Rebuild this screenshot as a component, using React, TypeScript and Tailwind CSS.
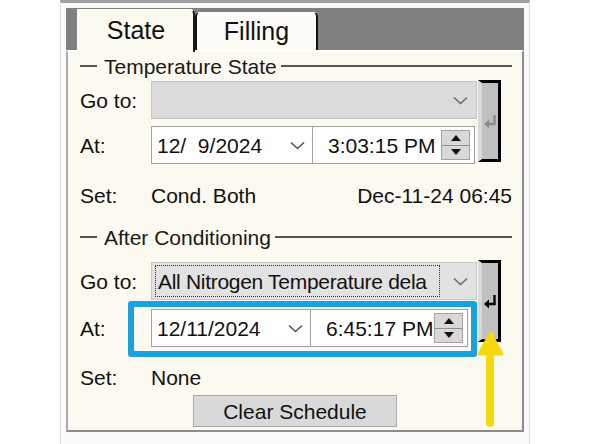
import React from "react";

const Chevron = ({ color = "#6b6b6b" }: { color?: string }) => (
  <svg width="15" height="9" viewBox="0 0 15 9" className="shrink-0">
    <path d="M1 1.5 L7.5 7.5 L14 1.5" fill="none" stroke={color} strokeWidth="1.6" />
  </svg>
);

const Spin = () => (
  <div className="w-[29px] h-[30px] border border-[#a3a3a3] bg-[#d8d8d8] flex flex-col shrink-0">
    <div className="flex-1 flex items-center justify-center border-b border-[#8f8f8f]">
      <svg width="10" height="6" viewBox="0 0 10 6">
        <path d="M5 0 L10 6 L0 6 Z" fill="#111" />
      </svg>
    </div>
    <div className="flex-1 flex items-center justify-center">
      <svg width="10" height="6" viewBox="0 0 10 6">
        <path d="M0 0 L10 0 L5 6 Z" fill="#111" />
      </svg>
    </div>
  </div>
);

const ReturnIcon = ({ color }: { color: string }) => (
  <svg width="13" height="15" viewBox="0 0 13 15">
    <path d="M10.5 1 V10 H4" fill="none" stroke={color} strokeWidth="2.4" />
    <path d="M0 10 L5 5.5 L5 14.5 Z" fill={color} />
  </svg>
);

function GroupHeader({ title }: { title: string }) {
  return (
    <div className="flex items-center h-[20px]">
      <div className="w-[17px] border-t-2 border-[#555]" />
      <span className="ml-[7px] mr-[4px] text-[#1a1a1a]">{title}</span>
      <div className="flex-1 border-t-2 border-[#555]" />
    </div>
  );
}

function ApplyButton({ active }: { active: boolean }) {
  return (
    <div className="ml-[1px] w-[23px] h-[82px] border-t-[3px] border-r-[3px] border-b-[3px] border-black border-l-[4px] border-l-[#d9d9d9] bg-[#c0c0c0] flex items-center justify-center shrink-0">
      <ReturnIcon color={active ? "#000" : "#8c8c8c"} />
    </div>
  );
}

function DateField({ value, width }: { value: string; width: string }) {
  return (
    <div className={`${width} h-[38px] bg-white border border-[#a0a0a0] flex items-center pl-[5px] pr-[7px]`}>
      <span className="whitespace-pre flex-1">{value}</span>
      <Chevron color="#555" />
    </div>
  );
}

function TimeField({ value, width }: { value: string; width: string }) {
  return (
    <div className={`${width} h-[38px] bg-white border border-l-0 border-[#a0a0a0] flex items-center pl-[15px] pr-[4px]`}>
      <span className="flex-1 whitespace-pre">{value}</span>
      <Spin />
    </div>
  );
}

export default function App() {
  return (
    <div className="w-[592px] h-[444px] bg-white overflow-hidden font-['Liberation_Sans',Arial,sans-serif] text-[21px] leading-none text-[#111]">
      <div className="ml-[60px] w-[470px] h-[444px] border-t-[3px] border-t-[#a0a0a0] border-x border-x-[#dadada] bg-[#fafafa] pt-[5px] px-[5px]">
        {/* tab strip */}
        <div className="h-[42px] bg-[#808080] flex items-end pl-[11px]">
          <div className="w-[118px] h-[43px] -mb-[2px] z-10 bg-[#fcf9f0] border-l-2 border-t-2 border-white border-r-2 border-r-[#1a1a1a] rounded-tr-[5px] flex items-center justify-center pb-[3px] text-[25px]">
            State
          </div>
          <div className="w-[123px] h-[38px] bg-[#fdfbf6] border-x-2 border-[#111] border-t border-t-white rounded-t-[5px] flex items-center justify-center pb-[1px] text-[25px]">
            Filling
          </div>
        </div>

        {/* panel */}
        <div className="relative h-[382px] bg-[#fcf9f0] border-t-2 border-t-white border-l-2 border-l-[#a8a8a8] border-r-2 border-r-[#8c8c8c] border-b-2 border-b-[#8c8c8c] pl-[12px] pr-[10px]">
          <div className="mt-[4px]">
            <GroupHeader title="Temperature State" />
          </div>

          <div className="mt-[5px] flex items-start">
            <div className="w-[397px] flex flex-col gap-[7px]">
              <div className="flex items-center">
                <span className="w-[71px]">Go to:</span>
                <div className="w-[326px] h-[38px] bg-[#dbdbdb] border border-[#c6c6c6] flex items-center justify-end pr-[8px]">
                  <Chevron />
                </div>
              </div>
              <div className="flex items-center">
                <span className="w-[71px]">At:</span>
                <DateField value="12/  9/2024" width="w-[162px]" />
                <TimeField value="3:03:15 PM" width="w-[162px]" />
              </div>
            </div>
            <div className="-mt-[1px]">
              <ApplyButton active={false} />
            </div>
          </div>

          <div className="mt-[19px] h-[24px] flex items-center">
            <span className="w-[71px]">Set:</span>
            <span>Cond. Both</span>
            <span className="ml-auto">Dec-11-24 06:45</span>
          </div>

          <div className="mt-[20px]">
            <GroupHeader title="After Conditioning" />
          </div>

          <div className="mt-[15px] flex items-start">
            <div className="w-[397px] flex flex-col gap-[9px]">
              <div className="flex items-center">
                <span className="w-[71px]">Go to:</span>
                <div className="w-[326px] h-[38px] bg-[#e2e2e2] border border-[#c6c6c6] flex items-center pl-[3px] pr-[8px]">
                  <div className="w-[285px] h-[32px] border border-dotted border-[#333] flex items-center pl-[2px] overflow-hidden whitespace-nowrap tracking-[-0.3px]">
                    All Nitrogen Temperature dela
                  </div>
                  <div className="ml-auto">
                    <Chevron />
                  </div>
                </div>
              </div>
              <div className="flex items-center">
                <span className="w-[71px]">At:</span>
                <DateField value="12/11/2024" width="w-[160px]" />
                <TimeField value="6:45:17 PM" width="w-[157px]" />
              </div>
            </div>
            <div className="-mt-[2px]">
              <ApplyButton active={true} />
            </div>
          </div>

          <div className="mt-[18px] h-[24px] flex items-center">
            <span className="w-[71px]">Set:</span>
            <span>None</span>
          </div>

          <button className="mt-[6px] ml-[113px] w-[204px] h-[32px] bg-[#d9d9d9] border border-[#a9a9a9] flex items-center justify-center">
            Clear Schedule
          </button>

          {/* annotation overlays */}
          <div className="absolute left-[60px] top-[249px] w-[349px] h-[56px] border-[6px] border-[#1ba1dc] rounded-[3px] pointer-events-none" />
          <svg className="absolute left-[408px] top-[278px] z-20" width="30" height="98" viewBox="0 0 30 98">
            <line x1="14" y1="20" x2="14" y2="93" stroke="#f6d80f" strokeWidth="8" strokeLinecap="round" />
            <path d="M14.5 3 L26 24 L3 24 Z" fill="#f6d80f" stroke="#f6d80f" strokeWidth="3" strokeLinejoin="round" />
          </svg>
        </div>
      </div>
    </div>
  );
}
